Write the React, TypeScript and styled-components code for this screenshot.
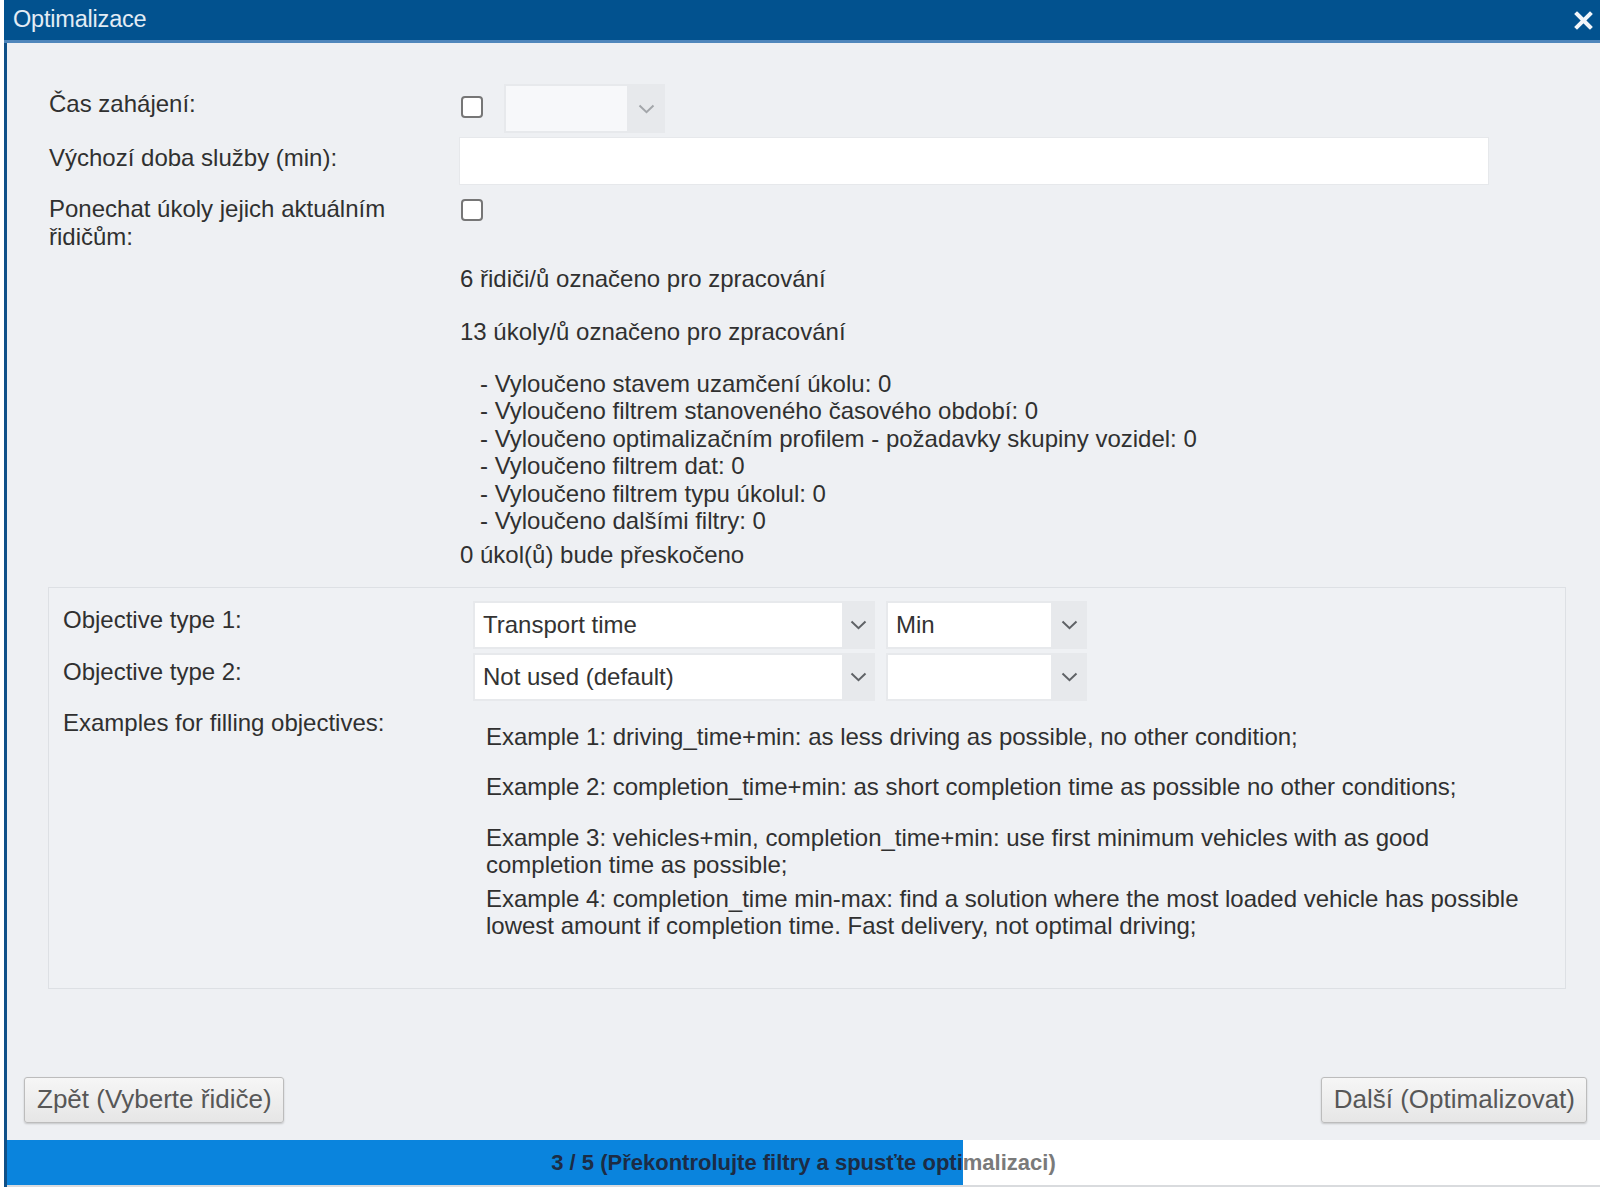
import React from "react";
import styled, { createGlobalStyle } from "styled-components";

const GlobalStyle = createGlobalStyle`
  html, body {
    margin: 0;
    padding: 0;
    background: #ffffff;
  }
  body {
    font-family: "Liberation Sans", Arial, sans-serif;
  }
`;

const Window = styled.div`
  margin-left: 4px;
  display: flex;
  flex-direction: column;
  color: #303030;
  font-size: 24px;
  line-height: 27.5px;
`;

const TitleBar = styled.div`
  height: 40px;
  background: #02528f;
  border-bottom: 3px solid #4f86bb;
  display: flex;
  align-items: center;
  justify-content: space-between;
  padding: 0 7px 0 9px;
`;

const Title = styled.span`
  color: #e3ecf5;
  font-size: 23.5px;
  letter-spacing: -0.2px;
`;

const CloseButton = styled.button`
  border: none;
  background: transparent;
  padding: 0;
  width: 19px;
  height: 19px;
  display: flex;
  cursor: pointer;
`;

const Content = styled.div`
  border-left: 3px solid #0f5088;
  background: #eef0f3;
  display: flex;
  flex-direction: column;
`;

const Body = styled.div`
  padding: 41px 34px 0 42px;
`;

const FormGrid = styled.div<{ $labelWidth: number; $gap: number }>`
  display: grid;
  grid-template-columns: ${(p) => p.$labelWidth}px 1fr;
  row-gap: ${(p) => p.$gap}px;
  align-items: start;
`;

const Label = styled.div<{ $pad?: number }>`
  padding-top: ${(p) => p.$pad ?? 6}px;
  padding-right: 24px;
  line-height: 28px;
`;

const Field = styled.div`
  display: flex;
  align-items: flex-start;
  gap: 21px;
`;

const Checkbox = styled.span<{ $top: number }>`
  display: block;
  width: 18px;
  height: 18px;
  margin-top: ${(p) => p.$top}px;
  margin-left: 1px;
  border: 2px solid #767676;
  border-radius: 4px;
  background: #fff;
`;

const Select = styled.div<{ $field: number; $arrow: number; $height: number }>`
  display: flex;
  height: ${(p) => p.$height}px;
  background: #e7e9ec;
  padding: 2px 0 2px 2px;
  box-sizing: border-box;

  & > span:first-child {
    width: ${(p) => p.$field - 2}px;
  }
  & > span:last-child {
    width: ${(p) => p.$arrow}px;
  }
`;

const SelectValue = styled.span<{ $disabled?: boolean }>`
  display: flex;
  align-items: center;
  padding-left: 8px;
  box-sizing: border-box;
  background: ${(p) => (p.$disabled ? "#f7f8fa" : "#ffffff")};
  color: #333;
  white-space: nowrap;
`;

const SelectArrow = styled.span`
  display: flex;
  align-items: center;
  justify-content: center;
`;

const TextInput = styled.div`
  width: 1028px;
  height: 46px;
  background: #ffffff;
  box-shadow: 0 0 0 1px #e6e8eb;
`;

const Notes = styled.div`
  grid-column: 2;
  margin-top: 9px;
  margin-bottom: 18px;
`;

const NoteLine = styled.div<{ $mt?: number }>`
  margin-top: ${(p) => p.$mt ?? 0}px;
  white-space: nowrap;
`;

const ExcludedList = styled.div`
  margin-top: 24.5px;
  padding-left: 20px;
  line-height: 27.4px;
`;

const Panel = styled.div`
  margin-left: -1px;
  border: 1px solid #dde0e4;
  background: #eff1f4;
  padding: 13px 14px 48px 14px;
`;

const PanelFields = styled.div`
  display: flex;
  gap: 11px;
`;

const Examples = styled.div`
  padding: 18px 0 0 13px;
  max-width: 1050px;
`;

const Example = styled.p<{ $mb: number }>`
  margin: 0 0 ${(p) => p.$mb}px 0;
`;

const Footer = styled.div`
  display: flex;
  justify-content: space-between;
  padding: 88px 13px 0 17px;
`;

const Button = styled.button`
  height: 46px;
  padding: 0 11px 0 12px;
  font: inherit;
  font-size: 26px;
  color: #575757;
  background: linear-gradient(#f6f6f6, #e6e6e6);
  border: 1px solid #bcbcbc;
  border-radius: 3px;
  box-shadow: 0 1px 2px rgba(0, 0, 0, 0.18);
  cursor: pointer;
`;

const ProgressTrack = styled.div`
  margin-top: 17px;
  height: 45px;
  background: #ffffff;
  border-bottom: 2px solid #d9dbde;
  display: grid;
`;

const ProgressLayer = styled.div`
  grid-area: 1 / 1;
  overflow: hidden;
`;

const ProgressFill = styled(ProgressLayer)`
  background: #0a84dd;
`;

const ProgressLabel = styled.div<{ $dark?: boolean }>`
  height: 45px;
  display: flex;
  align-items: center;
  justify-content: center;
  font-size: 22px;
  font-weight: bold;
  white-space: nowrap;
  color: ${(p) => (p.$dark ? "#1c2c45" : "#7a7a7a")};
`;

const Chevron: React.FC<{ light?: boolean }> = ({ light }) => (
  <svg width="17" height="10" viewBox="0 0 17 10">
    <path
      d="M1.5 1.5 L8.5 8.2 L15.5 1.5"
      fill="none"
      stroke={light ? "#a3a6aa" : "#5f6266"}
      strokeWidth="2"
    />
  </svg>
);

const SelectBox: React.FC<{
  value?: string;
  field: number;
  arrow: number;
  height: number;
  disabled?: boolean;
}> = ({ value, field, arrow, height, disabled }) => (
  <Select $field={field} $arrow={arrow} $height={height}>
    <SelectValue $disabled={disabled}>{value}</SelectValue>
    <SelectArrow>
      <Chevron light={disabled} />
    </SelectArrow>
  </Select>
);

const excluded = [
  "- Vyloučeno stavem uzamčení úkolu: 0",
  "- Vyloučeno filtrem stanoveného časového období: 0",
  "- Vyloučeno optimalizačním profilem - požadavky skupiny vozidel: 0",
  "- Vyloučeno filtrem dat: 0",
  "- Vyloučeno filtrem typu úkolul: 0",
  "- Vyloučeno dalšími filtry: 0",
];

const examples = [
  {
    text: "Example 1: driving_time+min: as less driving as possible, no other condition;",
    mb: 22.5,
  },
  {
    text: "Example 2: completion_time+min: as short completion time as possible no other conditions;",
    mb: 23.5,
  },
  {
    text: "Example 3: vehicles+min, completion_time+min: use first minimum vehicles with as good completion time as possible;",
    mb: 6,
  },
  {
    text: "Example 4: completion_time min-max: find a solution where the most loaded vehicle has possible lowest amount if completion time. Fast delivery, not optimal driving;",
    mb: 0,
  },
];

const step = 3;
const steps = 5;

const App: React.FC = () => {
  const progress = (step / steps) * 100;
  const label = `${step} / ${steps} (Překontrolujte filtry a spusťte optimalizaci)`;

  return (
    <>
      <GlobalStyle />
      <Window>
        <TitleBar>
          <Title>Optimalizace</Title>
          <CloseButton aria-label="Zavřít">
            <svg width="19" height="19" viewBox="0 0 19 19">
              <path
                d="M3 3 L16 16 M16 3 L3 16"
                stroke="#f2f6fa"
                strokeWidth="4"
                strokeLinecap="square"
              />
            </svg>
          </CloseButton>
        </TitleBar>
        <Content>
          <Body>
            <FormGrid $labelWidth={411} $gap={5}>
              <Label>Čas zahájení:</Label>
              <Field>
                <Checkbox $top={12} />
                <SelectBox field={123} arrow={38} height={49} disabled />
              </Field>

              <Label>Výchozí doba služby (min):</Label>
              <Field>
                <TextInput />
              </Field>

              <Label>Ponechat úkoly jejich aktuálním řidičům:</Label>
              <Field>
                <Checkbox $top={10} />
              </Field>

              <Notes>
                <NoteLine>6 řidiči/ů označeno pro zpracování</NoteLine>
                <NoteLine $mt={25.5}>13 úkoly/ů označeno pro zpracování</NoteLine>
                <ExcludedList>
                  {excluded.map((line) => (
                    <NoteLine key={line}>{line}</NoteLine>
                  ))}
                </ExcludedList>
                <NoteLine $mt={7}>0 úkol(ů) bude přeskočeno</NoteLine>
              </Notes>
            </FormGrid>

            <Panel>
              <FormGrid $labelWidth={410} $gap={4}>
                <Label $pad={5}>Objective type 1:</Label>
                <PanelFields>
                  <SelectBox value="Transport time" field={369} arrow={33} height={48} />
                  <SelectBox value="Min" field={165} arrow={36} height={48} />
                </PanelFields>

                <Label $pad={5}>Objective type 2:</Label>
                <PanelFields>
                  <SelectBox value="Not used (default)" field={369} arrow={33} height={48} />
                  <SelectBox field={165} arrow={36} height={48} />
                </PanelFields>

                <Label $pad={4}>Examples for filling objectives:</Label>
                <Examples>
                  {examples.map((ex) => (
                    <Example key={ex.text} $mb={ex.mb}>
                      {ex.text}
                    </Example>
                  ))}
                </Examples>
              </FormGrid>
            </Panel>
          </Body>

          <Footer>
            <Button>Zpět (Vyberte řidiče)</Button>
            <Button>Další (Optimalizovat)</Button>
          </Footer>

          <ProgressTrack>
            <ProgressLayer>
              <ProgressLabel>{label}</ProgressLabel>
            </ProgressLayer>
            <ProgressFill style={{ width: `${progress}%` }}>
              <ProgressLabel $dark style={{ width: `${(100 / progress) * 100}%` }}>
                {label}
              </ProgressLabel>
            </ProgressFill>
          </ProgressTrack>
        </Content>
      </Window>
    </>
  );
};

export default App;
